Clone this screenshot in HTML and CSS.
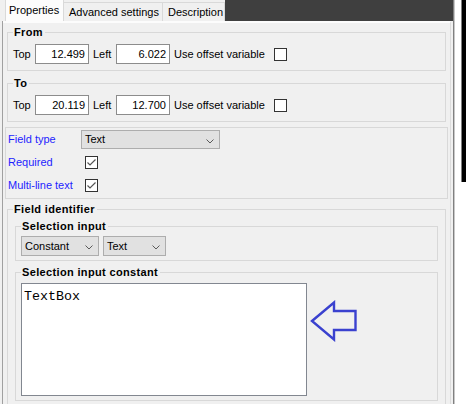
FILE: index.html
```html
<!DOCTYPE html>
<html>
<head>
<meta charset="utf-8">
<link rel="stylesheet" href="styles.css">
</head>
<body>
<div class="window">
  <div class="main">
    <div class="tabs">
      <div class="tab tab-active">Properties</div>
      <div class="tab tab-adv">Advanced settings</div>
      <div class="tab tab-desc">Description</div>
      <div class="tabs-fill"></div>
    </div>
    <div class="panel">
      <div class="page">
        <fieldset class="group g-from">
          <legend>From</legend>
          <div class="coord-row">
            <span class="lbl-top">Top</span>
            <span class="num">12.499</span>
            <span class="lbl-left">Left</span>
            <span class="num">6.022</span>
            <span class="lbl-use">Use offset variable</span>
            <span class="check"></span>
          </div>
        </fieldset>
        <fieldset class="group g-to">
          <legend>To</legend>
          <div class="coord-row">
            <span class="lbl-top">Top</span>
            <span class="num">20.119</span>
            <span class="lbl-left">Left</span>
            <span class="num">12.700</span>
            <span class="lbl-use">Use offset variable</span>
            <span class="check"></span>
          </div>
        </fieldset>
        <div class="fbox">
          <div class="frow">
            <span class="flabel">Field type</span>
            <div class="sel sel-type"><span>Text</span><svg class="chev" width="8" height="5" viewBox="0 0 8 5"><polyline points="0.5,0.5 4,4 7.5,0.5" fill="none" stroke="#5a5a5a" stroke-width="1"/></svg></div>
          </div>
          <div class="frow">
            <span class="flabel">Required</span>
            <span class="check check-on"><svg width="11" height="11" viewBox="0 0 11 11"><polyline points="1.5,5.5 4,8 9.5,2.5" fill="none" stroke="#555" stroke-width="1.2"/></svg></span>
          </div>
          <div class="frow">
            <span class="flabel">Multi-line text</span>
            <span class="check check-on"><svg width="11" height="11" viewBox="0 0 11 11"><polyline points="1.5,5.5 4,8 9.5,2.5" fill="none" stroke="#555" stroke-width="1.2"/></svg></span>
          </div>
        </div>
        <fieldset class="group g-ident">
          <legend>Field identifier</legend>
          <fieldset class="group sub sub-input">
            <legend>Selection input</legend>
            <div class="sel-row">
              <div class="sel sel-const"><span>Constant</span><svg class="chev" width="8" height="5" viewBox="0 0 8 5"><polyline points="0.5,0.5 4,4 7.5,0.5" fill="none" stroke="#5a5a5a" stroke-width="1"/></svg></div>
              <div class="sel sel-text"><span>Text</span><svg class="chev" width="8" height="5" viewBox="0 0 8 5"><polyline points="0.5,0.5 4,4 7.5,0.5" fill="none" stroke="#5a5a5a" stroke-width="1"/></svg></div>
            </div>
          </fieldset>
          <fieldset class="group sub sub-const">
            <legend>Selection input constant</legend>
            <div class="const-row">
              <div class="tbox">TextBox</div>
              <svg class="arrow" width="48" height="42" viewBox="0 0 48 42"><polygon points="2,21 24,2.5 24,11 45.5,11 45.5,30 24,30 24,39.5" fill="none" stroke="#3a41cf" stroke-width="2.4" stroke-linejoin="miter"/></svg>
            </div>
          </fieldset>
        </fieldset>
      </div>
    </div>
  </div>
  <div class="vscroll"><div class="thumb"></div></div>
</div>
</body>
</html>
```
FILE: styles.css
```css
* { box-sizing: border-box; }
html, body { margin: 0; padding: 0; height: 100%; overflow: hidden; }
body {
  font: 11px/13px "Liberation Sans", Arial, sans-serif;
  color: #000;
  background: #f0f0f0;
}
.window { display: flex; width: 466px; height: 404px; }
.main {
  width: 454px;
  display: flex;
  flex-direction: column;
  border-right: 1px solid #808080;
}
.tabs { display: flex; height: 21px; flex: none; background: #f0f0f0; }
.tab { white-space: nowrap; }
.tab-active {
  margin-left: 5px;
  width: 59px;
  height: 21px;
  padding: 4px 0 0 3px;
  background: #fcfcfc;
  border-left: 1px solid #d9d9d9;
  border-right: 1px solid #d9d9d9;
}
.tab-adv, .tab-desc {
  margin-top: 2px;
  height: 19px;
  padding: 3px 0 0 5px;
  background: #f0f0f0;
  border-top: 1px solid #d9d9d9;
  border-right: 1px solid #d9d9d9;
}
.tab-adv { width: 99px; }
.tab-desc { width: 62px; }
.tabs-fill { flex: 1; background: #3f3f3f; }
.panel {
  flex: 1;
  display: flex;
  margin-left: 2px;
  border-left: 1px solid #a0a0a0;
  padding-right: 2px;
  min-height: 0;
}
.page {
  flex: 1;
  border-top: 2px solid #fcfcfc;
  border-right: 1px solid #dcdcdc;
  padding: 0 4px;
  min-width: 0;
}
.group {
  margin: 0;
  min-width: 0;
  border: 1px solid #d8d8d8;
  padding: 5px 7px 6px 5px;
}
.group legend {
  padding: 0 2px 0 1px;
  font-weight: bold;
  line-height: 13px;
  letter-spacing: 0.35px;
}
.g-from { margin-top: 3px; }
.g-to { margin-top: 6px; }
.coord-row { display: flex; align-items: center; height: 20px; }
.lbl-top { width: 22px; }
.lbl-left { width: 23px; margin-left: 4px; }
.lbl-use { width: 100px; margin-left: 4px; white-space: nowrap; }
.num {
  width: 54px;
  height: 20px;
  background: #fff;
  border: 1px solid #8c8c8c;
  text-align: right;
  padding-right: 3px;
  line-height: 18px;
}
.check {
  width: 13px;
  height: 13px;
  border: 1px solid #333;
  background: #fff;
  display: flex;
}
.fbox {
  margin: 5px -2px 0;
  border: 1px solid #d8d8d8;
  padding: 0 0 1px 2px;
}
.frow { display: flex; align-items: center; height: 23px; }
.flabel { width: 73px; color: #1e1eff; white-space: nowrap; }
.frow .check { margin-left: 4px; }
.sel {
  display: flex;
  align-items: center;
  justify-content: space-between;
  height: 20px;
  padding: 0 5px 0 3px;
  background: #e1e1e1;
  border: 1px solid #adadad;
}
.chev { margin-top: 3px; }
.sel-type { width: 139px; height: 19px; }
.g-ident { margin-top: 4px; padding: 4px 7px 20px 5px; }
.sub { margin-left: 2px; padding: 3px 5px 4px 5px; }
.sub-const { margin-top: 5px; padding-top: 4px; }
.sel-row { display: flex; gap: 4px; }
.sel-const { width: 78px; }
.sel-text { width: 63px; }
.const-row { display: flex; align-items: flex-start; }
.tbox {
  width: 286px;
  height: 113px;
  background: #fff;
  border: 1px solid #828790;
  padding: 5px 2px;
  font: 13.33px/15px "Liberation Mono", "Courier New", monospace;
}
.arrow { margin: 17px 0 0 3px; }
.vscroll {
  width: 12px;
  background: #fff;
  border-left: 1px solid #c8c8c8;
}
.thumb {
  margin-left: 6px;
  width: 5px;
  height: 182px;
  background: #000;
  border-left: 1px solid #808080;
}
```
